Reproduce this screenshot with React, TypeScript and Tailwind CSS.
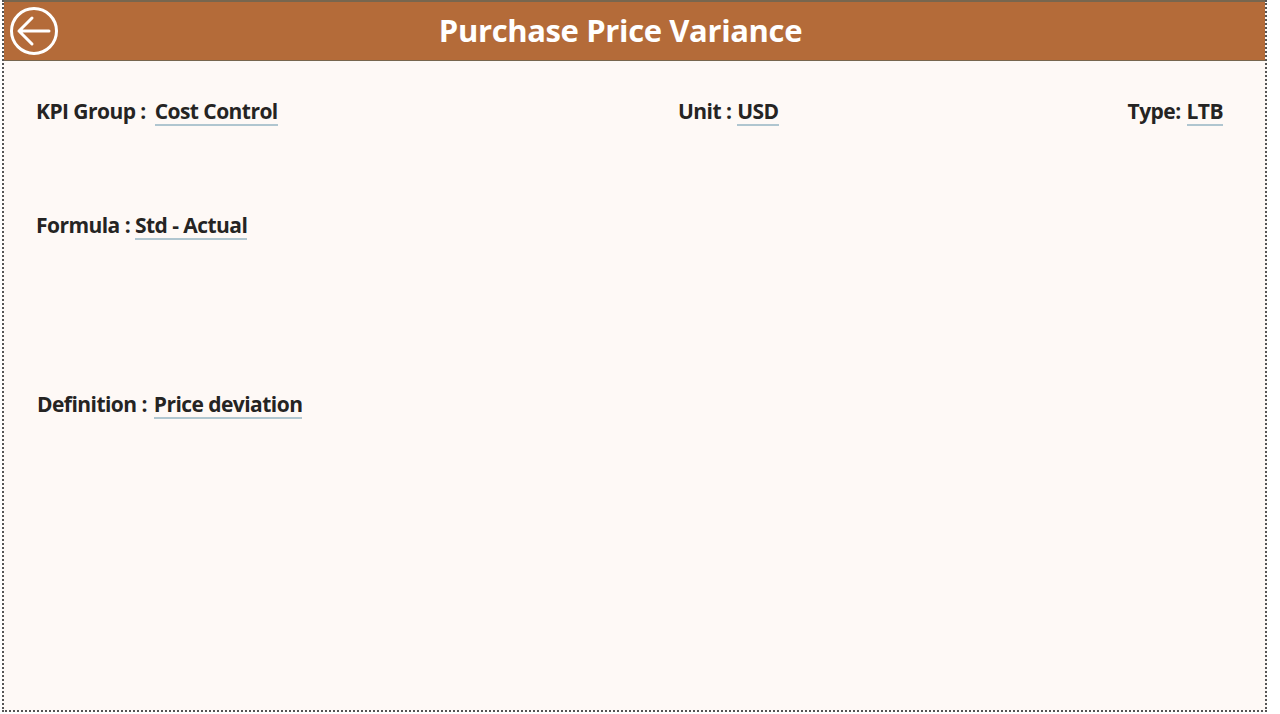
import type { ReactNode } from "react";

function Field({
  label,
  value,
  className = "",
  labelClass = "",
}: {
  label: string;
  value: string;
  className?: string;
  labelClass?: string;
}) {
  return (
    <div className={`flex items-start text-[21px] leading-[25px] font-bold tracking-[-0.55px] text-[#252423] ${className}`}>
      <span className={`whitespace-pre ${labelClass}`}>{label} </span>
      <span className="border-b-2 border-[#b0c6d0] whitespace-pre">{value}</span>
    </div>
  );
}

function Row({ children, className = "" }: { children: ReactNode; className?: string }) {
  return <div className={`flex items-start ${className}`}>{children}</div>;
}

export default function App() {
  return (
    <div className="h-[714px] w-[1280px] overflow-hidden bg-white font-['Open_Sans','Noto_Sans',sans-serif]">
      <div className="ml-[2px] flex h-[712px] w-[1265px] flex-col border-2 border-t-0 border-dotted border-[#555555] bg-[#fef9f6]">
        {/* Header */}
        <div className="relative flex h-[61px] items-center justify-center border-y border-t-2 border-y-[#77664f] bg-[#b46b39] pb-[2px]">
          <svg
            className="absolute left-[6px] top-[5px] h-[48px] w-[48px]"
            viewBox="0 0 48 48"
            fill="none"
            stroke="white"
            strokeWidth="3"
            strokeLinecap="round"
            strokeLinejoin="round"
          >
            <circle cx="24" cy="24" r="22.5" />
            <path d="M9 24h30M22 11 9 24l13 13" />
          </svg>
          <h1 className="mr-[28px] text-[31px] font-bold tracking-[-0.37px] text-white">Purchase Price Variance</h1>
        </div>

        {/* Details */}
        <div className="flex flex-col pl-[32px] pr-[42px]">
          <Row className="mt-[38px]">
            <Field label="KPI Group :" value="Cost Control" className="w-[642px]" labelClass="mr-[4px]" />
            <Field label="Unit :" value="USD" labelClass="mr-[1px]" />
            <Field label="Type:" value="LTB" className="ml-auto" labelClass="mr-[1px]" />
          </Row>
          <Row className="mt-[87px]">
            <Field label="Formula :" value="Std - Actual" />
          </Row>
          <Row className="mt-[152px] pl-[1px]">
            <Field label="Definition :" value="Price deviation" labelClass="mr-[2px]" />
          </Row>
        </div>
      </div>
    </div>
  );
}
